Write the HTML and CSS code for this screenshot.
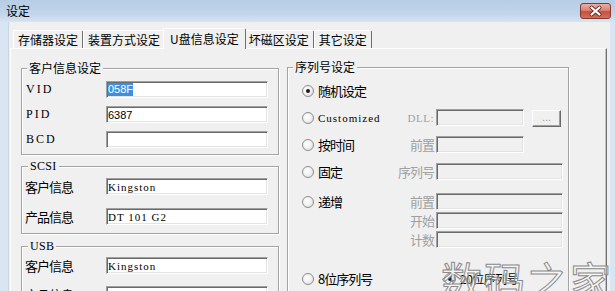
FILE: index.html
```html
<!DOCTYPE html>
<html lang="zh">
<head>
<meta charset="utf-8">
<title>设定</title>
<link rel="stylesheet" href="styles.css">
</head>
<body>
<div class="window">
  <div class="titlebar">
    <span class="title">设定</span>
    <div class="close">
      <svg width="29" height="14" viewBox="0 0 29 14">
        <path d="M10.5 3.5 L18.5 10.5 M18.5 3.5 L10.5 10.5" stroke="#6e2a22" stroke-width="4" stroke-linecap="round"/>
        <path d="M10.5 3.5 L18.5 10.5 M18.5 3.5 L10.5 10.5" stroke="#fff" stroke-width="2.2" stroke-linecap="round"/>
      </svg>
    </div>
  </div>
  <div class="client">
    <div class="tabs">
      <div class="tab">存储器设定</div>
      <div class="tab">装置方式设定</div>
      <div class="tab active">U盘信息设定</div>
      <div class="tab">坏磁区设定</div>
      <div class="tab">其它设定</div>
    </div>
    <div class="panel">
      <div class="leftcol">
        <div class="group g-cust">
          <span class="gtitle">客户信息设定</span>
          <div class="row"><span class="lbl mono">VID</span><div class="input"><span class="sel">058F</span></div></div>
          <div class="row"><span class="lbl mono">PID</span><div class="input"><span class="sans">6387</span></div></div>
          <div class="row"><span class="lbl mono">BCD</span><div class="input"></div></div>
        </div>
        <div class="group g-scsi">
          <span class="gtitle mono-title">SCSI</span>
          <div class="row"><span class="lbl cjk">客户信息</span><div class="input"><span class="val">Kingston</span></div></div>
          <div class="row"><span class="lbl cjk">产品信息</span><div class="input"><span class="val">DT 101 G2</span></div></div>
        </div>
        <div class="group g-usb">
          <span class="gtitle mono-title">USB</span>
          <div class="row"><span class="lbl cjk">客户信息</span><div class="input"><span class="val">Kingston</span></div></div>
          <div class="row"><span class="lbl cjk">产品信息</span><div class="input"><span class="val">DT 101 G2</span></div></div>
        </div>
      </div>
      <div class="group g-serial">
        <span class="gtitle">序列号设定</span>
        <div class="srow first">
          <div class="choice"><span class="radio on"></span><span class="cjk">随机设定</span></div>
        </div>
        <div class="srow">
          <div class="choice"><span class="radio"></span><span class="val">Customized</span></div>
          <span class="dlbl mono-d">DLL:</span>
          <div class="inputwrap"><div class="input dis w-s"></div><div class="btn">...</div></div>
        </div>
        <div class="srow">
          <div class="choice"><span class="radio"></span><span class="cjk">按时间</span></div>
          <span class="dlbl">前置</span>
          <div class="input dis w-s"></div>
        </div>
        <div class="srow">
          <div class="choice"><span class="radio"></span><span class="cjk">固定</span></div>
          <span class="dlbl">序列号</span>
          <div class="input dis w-l"></div>
        </div>
        <div class="srow inc">
          <div class="choice"><span class="radio"></span><span class="cjk">递增</span></div>
          <span class="dlbl">前置</span>
          <div class="input dis w-l"></div>
          <span class="dlbl c2">开始</span>
          <div class="input dis w-l"></div>
          <span class="dlbl c2">计数</span>
          <div class="input dis w-l"></div>
        </div>
        <div class="srow bits">
          <div class="choice wide"><span class="radio"></span><span class="cjk">8位序列号</span></div>
          <div class="choice"><span class="radio on"></span><span class="cjk small">20位序列号</span></div>
        </div>
      </div>
    </div>
  </div>
  <div class="watermark">数码之家</div>
</div>
</body>
</html>
```

FILE: styles.css
```css
* { box-sizing: border-box; }
body {
  margin: 0;
  font-family: "Noto Sans CJK SC", "Liberation Sans", sans-serif;
  font-size: 12px;
  color: #000;
}
.window {
  width: 615px;
  height: 291px;
  overflow: hidden;
  position: relative;
  background: #d9e5f2;
}
.titlebar {
  height: 22px;
  display: flex;
  justify-content: space-between;
  align-items: flex-start;
  padding: 0 4px 0 6px;
  background: linear-gradient(#b7cde6 0%, #c2d6eb 65%, #d7e4f2 100%);
}
.title { line-height: 21px; font-size: 12px; }
.close {
  margin-top: 3px;
  width: 31px;
  height: 16px;
  border: 1px solid #87392f;
  border-radius: 3px;
  background: linear-gradient(#eab0a4 0%, #d98373 45%, #c4503d 55%, #d0705c 100%);
  display: flex;
  align-items: center;
  justify-content: center;
}
.client {
  margin: 0 5px 0 8px;
  height: 269px;
  background: #f0f0f0;
  padding-top: 6px;
  border-left: 1px solid #c9d5e2;
}
.tabs {
  display: flex;
  align-items: flex-end;
  height: 20px;
  margin-left: 4px;
}
.tab {
  height: 18px;
  padding: 1px 4px 0;
  border: 1px solid;
  border-color: #fff #6f6f6f transparent #fff;
  border-bottom: 0;
  line-height: 16px;
  white-space: nowrap;
  background: #f0f0f0;
  border-radius: 2px 2px 0 0;
}
.tab.active {
  height: 21px;
  margin: 0 -2px -1px;
  position: relative;
  z-index: 1;
  padding: 2px 6px 0;
}
.panel {
  margin-left: 1px;
  width: 597px;
  height: 260px;
  border: 1px solid;
  border-color: #fcfcfc #6f6f6f #6f6f6f #fcfcfc;
  box-shadow: inset -1px 0 0 #c4c4c4;
  display: flex;
  gap: 8px;
  align-items: flex-start;
  padding: 18px 0 0 10px;
}
.leftcol { width: 258px; padding-top: 1px; }
.group {
  position: relative;
  border: 1px solid #a3a3a3;
  box-shadow: inset 1px 1px 0 #fff, 1px 1px 0 #fff;
}
.gtitle {
  position: absolute;
  top: -8px;
  left: 5px;
  padding: 0 2px;
  background: #f0f0f0;
  line-height: 14px;
  white-space: nowrap;
}
.mono-title {
  font-family: "Liberation Serif", serif;
  font-size: 12px;
  letter-spacing: 0.3px;
  left: 6px;
}
.row {
  display: flex;
  align-items: center;
  height: 17px;
}
.g-cust { padding: 12px 9px 6px 3px; }
.g-cust .row + .row { margin-top: 8px; }
.g-scsi { margin-top: 11px; padding: 11px 9px 8px 3px; }
.g-scsi .row + .row { margin-top: 13px; }
.g-usb { margin-top: 12px; padding: 10px 9px 8px 3px; }
.g-usb .row + .row { margin-top: 12px; }
.lbl { width: 81px; flex: none; white-space: nowrap; }
.lbl.mono {
  font-family: "Liberation Serif", serif;
  font-size: 12px;
  letter-spacing: 2px;
  padding-left: 1px;
}
.cjk { font-size: 13px; letter-spacing: -1px; white-space: nowrap; }
.cjk.small { font-size: 12px; letter-spacing: -0.5px; }
.input {
  width: 162px;
  height: 17px;
  background: #fff;
  border: 1px solid;
  border-color: #a0a0a0 #fff #fff #a0a0a0;
  box-shadow: inset 1px 1px 0 #6a6a6a, inset -1px -1px 0 #e3e3e3;
  padding-left: 1px;
  display: flex;
  align-items: center;
  font-size: 11px;
  flex: none;
}
.input.dis { background: #f0f0f0; }
.w-s { width: 88px; }
.w-l { width: 127px; }
.val {
  font-family: "Liberation Serif", serif;
  font-size: 11px;
  letter-spacing: 1px;
  white-space: nowrap;
}
.sans { font-family: "Liberation Sans", sans-serif; font-size: 11px; }
.sel {
  font-family: "Liberation Sans", sans-serif;
  font-size: 11px;
  background: #3f8fdf;
  color: #fff;
  line-height: 13px;
}
.g-serial {
  width: 282px;
  height: 240px;
  padding: 14px 0 0 14px;
}
.srow {
  display: grid;
  grid-template-columns: 88px 42px auto;
  column-gap: 2px;
  align-items: center;
  grid-auto-rows: 17px;
  margin-top: 10px;
}
.srow.first { margin-top: 0; }
.srow.inc { margin-top: 13px; row-gap: 2px; }
.srow.inc .c2 { grid-column: 2; }
.srow.bits { display: flex; margin-top: 22px; }
.choice {
  display: flex;
  align-items: center;
  gap: 4px;
  height: 17px;
  grid-column: 1;
}
.choice.wide { width: 140px; }
.radio {
  width: 12px;
  height: 12px;
  border-radius: 50%;
  border: 1px solid #8d8d8d;
  background: radial-gradient(circle at 40% 40%, #fff 0%, #f2f2f2 45%, #d6d6d6 100%);
  flex: none;
  position: relative;
}
.radio.on::after {
  content: "";
  position: absolute;
  left: 3px;
  top: 3px;
  width: 4px;
  height: 4px;
  border-radius: 50%;
  background: #1b1b1b;
}
.dlbl {
  color: #a0a0a0;
  text-align: right;
  font-size: 13px;
  letter-spacing: -1px;
  white-space: nowrap;
  grid-column: 2;
}
.mono-d {
  font-family: "Liberation Serif", serif;
  font-size: 11px;
  letter-spacing: 0.5px;
}
.inputwrap { display: flex; align-items: flex-start; }
.btn {
  width: 29px;
  height: 17px;
  margin: 1px 0 0 8px;
  border: 1px solid;
  border-color: #fff #6a6a6a #6a6a6a #fff;
  box-shadow: inset -1px -1px 0 #a0a0a0;
  color: #a0a0a0;
  text-align: center;
  line-height: 12px;
  font-family: "Liberation Sans", sans-serif;
  font-size: 11px;
  background: #f0f0f0;
}
.watermark {
  position: absolute;
  left: 441px;
  top: 259px;
  font-size: 41px;
  font-weight: 400;
  letter-spacing: 2px;
  line-height: 1;
  color: rgba(255, 255, 255, 0.35);
  -webkit-text-stroke: 1px #8a8a8a;
  white-space: nowrap;
  pointer-events: none;
}
```
